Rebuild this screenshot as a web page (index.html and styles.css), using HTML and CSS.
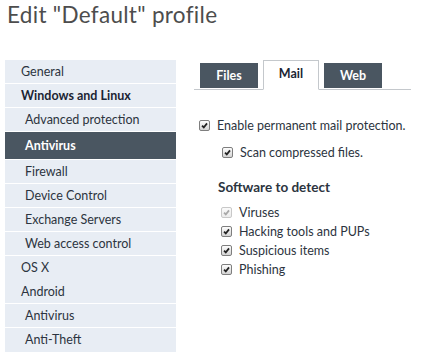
FILE: index.html
```html
<!DOCTYPE html>
<html>
<head>
<meta charset="utf-8">
<link rel="stylesheet" href="styles.css">
</head>
<body>
<h1 class="title">Edit "Default" profile</h1>
<div class="layout">
  <nav class="side">
    <div class="item">General</div>
    <div class="item bold">Windows and Linux</div>
    <div class="item sub">Advanced protection</div>
    <div class="item sub active">Antivirus</div>
    <div class="item sub">Firewall</div>
    <div class="item sub">Device Control</div>
    <div class="item sub">Exchange Servers</div>
    <div class="item sub">Web access control</div>
    <div class="item nosep">OS X</div>
    <div class="item">Android</div>
    <div class="item sub">Antivirus</div>
    <div class="item sub last">Anti-Theft</div>
  </nav>
  <main class="content">
    <div class="tabs">
      <div class="tab">Files</div>
      <div class="tab current">Mail</div>
      <div class="tab">Web</div>
    </div>
    <div class="opts">
      <label class="chk lvl0"><span class="box"><svg viewBox="0 0 10 10"><path d="M2.3 5.2 L4.2 7.2 L7.8 2.6" /></svg></span>Enable permanent mail protection.</label>
      <label class="chk lvl1"><span class="box"><svg viewBox="0 0 10 10"><path d="M2.3 5.2 L4.2 7.2 L7.8 2.6" /></svg></span>Scan compressed files.</label>
      <h2 class="section">Software to detect</h2>
      <div class="list">
        <label class="chk dis"><span class="box"><svg viewBox="0 0 10 10"><path d="M2.3 5.2 L4.2 7.2 L7.8 2.6" /></svg></span>Viruses</label>
        <label class="chk"><span class="box"><svg viewBox="0 0 10 10"><path d="M2.3 5.2 L4.2 7.2 L7.8 2.6" /></svg></span>Hacking tools and PUPs</label>
        <label class="chk"><span class="box"><svg viewBox="0 0 10 10"><path d="M2.3 5.2 L4.2 7.2 L7.8 2.6" /></svg></span>Suspicious items</label>
        <label class="chk"><span class="box"><svg viewBox="0 0 10 10"><path d="M2.3 5.2 L4.2 7.2 L7.8 2.6" /></svg></span>Phishing</label>
      </div>
    </div>
  </main>
</div>
</body>
</html>
```
FILE: styles.css
```css
* { box-sizing: border-box; }
html, body { margin: 0; padding: 0; background: #fff; }
body {
  font-family: "Lato", "Open Sans", sans-serif;
  color: #333;
  width: 422px;
  height: 362px;
  overflow: hidden;
}
.title {
  margin: 0;
  padding: 1px 0 0 7px;
  font-size: 22.5px;
  font-weight: 400;
  color: #4d4d4d;
  line-height: 28px;
  height: 60px;
  letter-spacing: 0.3px;
}
.layout {
  display: flex;
  align-items: flex-start;
}
.side {
  margin-left: 5px;
  width: 171px;
  background: #e8edf4;
  font-size: 12.5px;
}
.item {
  height: 24px;
  line-height: 24px;
  padding-left: 16px;
  color: #2c3440;
  border-bottom: 1px solid #fff;
}
.item.sub { padding-left: 20px; }
.item.bold { font-weight: 700; color: #1b2433; }
.item.nosep { border-bottom: none; }
.item.last { border-bottom: none; line-height: 24px; }
.item.active {
  background: #4a5661;
  color: #fff;
  font-weight: 700;
  height: 28px;
  line-height: 27px;
}
.content {
  margin-left: 18px;
  width: 217px;
}
.tabs {
  display: flex;
  align-items: flex-end;
  gap: 5px;
  padding-left: 6px;
  height: 30px;
  border-bottom: 1px solid #c4c8cc;
}
.tab {
  width: 58px;
  height: 25px;
  margin-bottom: 1px;
  background: #4a5661;
  color: #fff;
  font-weight: 700;
  font-size: 12.5px;
  text-align: center;
  line-height: 25px;
}
.tab.current {
  width: 56px;
  height: 30px;
  margin-bottom: -1px;
  background: #fff;
  color: #1b2433;
  border: 1px solid #c4c8cc;
  border-bottom: 1px solid #fff;
  line-height: 26px;
}
.opts {
  padding-top: 26px;
  font-size: 12.5px;
}
.chk {
  display: flex;
  align-items: center;
  gap: 7px;
  color: #2c3440;
  line-height: 19px;
}
.chk.lvl0 { padding-left: 5px; height: 19px; }
.chk.lvl1 { padding-left: 28px; margin-top: 8px; }
.box {
  width: 11px;
  height: 11px;
  border: 1px solid #7e7e7e;
  border-radius: 2px;
  background: linear-gradient(#fdfdfd, #d4d4d4);
  display: inline-flex;
  flex: none;
}
.box svg { width: 9px; height: 9px; }
.box path {
  fill: none;
  stroke: #222;
  stroke-width: 2;
}
.chk.dis .box { border-color: #c8c8c8; background: linear-gradient(#fafafa, #ececec); }
.chk.dis .box path { stroke: #a8a8a8; }
.section {
  margin: 16px 0 7px 24px;
  font-size: 13.5px;
  font-weight: 700;
  color: #2c3440;
  line-height: 18px;
}
.list { padding-left: 27px; }
```
